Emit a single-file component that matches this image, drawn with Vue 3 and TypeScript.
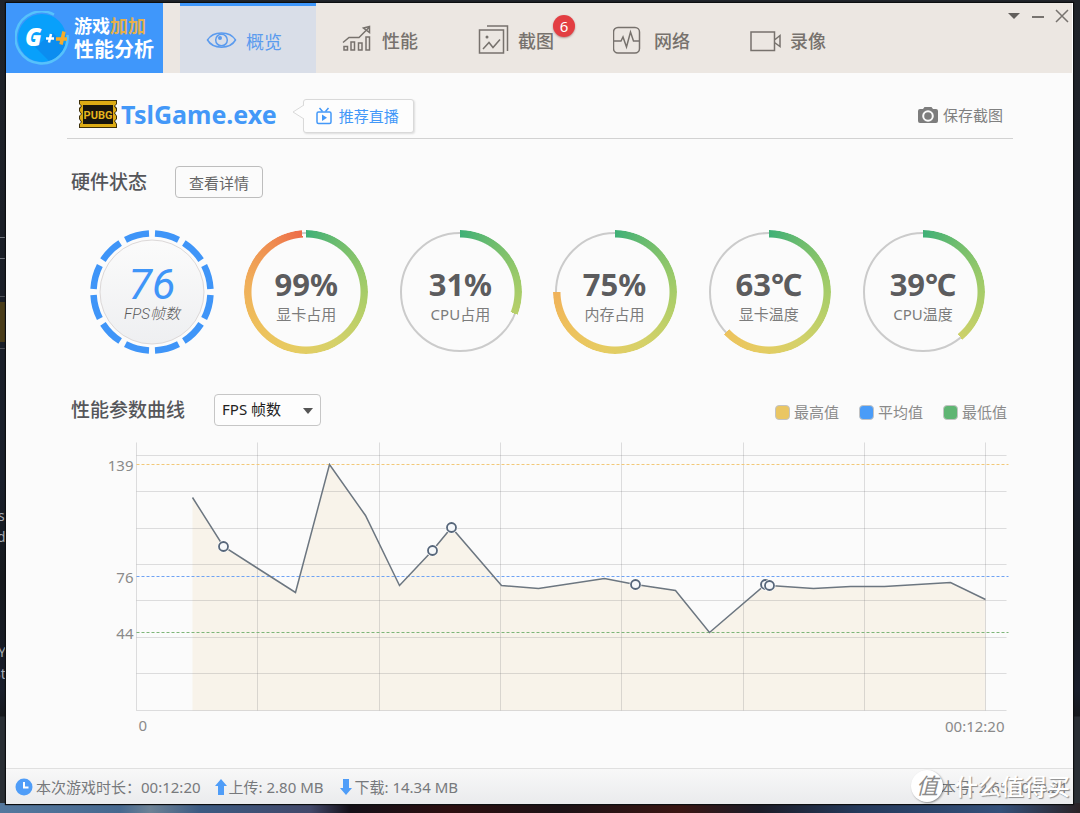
<script setup lang="ts">
import { computed, ref } from 'vue'

interface Tab {
  id: string
  label: string
  badge?: number
}

interface Gauge {
  label: string
  value: string
  percent: number
}

interface Sample {
  x: number
  y: number
  mark?: boolean
}

const tabs: Tab[] = [
  { id: 'overview', label: '概览' },
  { id: 'perf', label: '性能' },
  { id: 'shots', label: '截图', badge: 6 },
  { id: 'network', label: '网络' },
  { id: 'video', label: '录像' },
]
const activeTab = ref('overview')

const gauges: Gauge[] = [
  { label: '显卡占用', value: '99%', percent: 99 },
  { label: 'CPU占用', value: '31%', percent: 31 },
  { label: '内存占用', value: '75%', percent: 75 },
  { label: '显卡温度', value: '63℃', percent: 63 },
  { label: 'CPU温度', value: '39℃', percent: 39 },
]

const metric = ref('fps')

const legend = [
  { label: '最高值', kind: 'max' },
  { label: '平均值', kind: 'avg' },
  { label: '最低值', kind: 'min' },
]

const levels = [
  { value: 139, y: 22, kind: 'max' },
  { value: 76, y: 134, kind: 'avg' },
  { value: 44, y: 190, kind: 'min' },
]

const baseY = 268
const columns = [0, 121, 243, 364, 485, 607, 728, 849]
const rows = [13, 49, 86, 122, 158, 195, 231, 268]

const samples: Sample[] = [
  { x: 56, y: 55 },
  { x: 87, y: 104, mark: true },
  { x: 159, y: 150 },
  { x: 193, y: 22 },
  { x: 229, y: 73 },
  { x: 263, y: 143 },
  { x: 296, y: 108, mark: true },
  { x: 315, y: 85, mark: true },
  { x: 365, y: 143 },
  { x: 402, y: 146 },
  { x: 468, y: 136 },
  { x: 499, y: 142, mark: true },
  { x: 539, y: 148 },
  { x: 573, y: 190 },
  { x: 629, y: 142, mark: true },
  { x: 633, y: 143, mark: true },
  { x: 677, y: 146 },
  { x: 714, y: 144 },
  { x: 748, y: 144 },
  { x: 814, y: 140 },
  { x: 849, y: 157 },
]

const linePoints = computed(() => samples.map((s) => `${s.x},${s.y}`).join(' '))
const areaPoints = computed(
  () => `${samples[0].x},${baseY} ${linePoints.value} ${samples[samples.length - 1].x},${baseY}`,
)
const marks = computed(() => samples.filter((s) => s.mark))
</script>

<template>
  <div class="desktop">
    <div class="behind" aria-hidden="true">
      <span class="scrap s1">s</span>
      <span class="scrap s2">d</span>
      <span class="scrap s3">Y</span>
      <span class="scrap s4">St</span>
    </div>

    <div class="window">
      <header class="header">
        <div class="brand">
          <svg class="brand-mark" viewBox="0 0 54 54" aria-hidden="true">
            <circle cx="27" cy="27" r="24" fill="#08a0fb" />
            <path d="M20 36 L34 50 A24 24 0 0 0 50 34 L38 22 Z" fill="#0b8df0" />
            <path d="M39 3.6 A26 26 0 1 0 52.500 24" fill="none" stroke="#56c2fb" stroke-width="2.500" />
            <text x="10" y="35" class="mark-text">G</text>
            <path d="M36 23 L34 31.500 M31 27.500 H39" stroke="#fff" stroke-width="2.500" />
            <path d="M49 20.500 L46 33.500 M41 28 H52" stroke="#f5ab2c" stroke-width="3.500" />
          </svg>
          <div class="brand-name">
            <span class="brand-top">游戏<em>加加</em></span>
            <span class="brand-bottom">性能分析</span>
          </div>
        </div>

        <nav class="tabs">
          <button
            v-for="tab in tabs"
            :key="tab.id"
            type="button"
            class="tab"
            :class="{ active: tab.id === activeTab }"
            @click="activeTab = tab.id"
          >
            <svg class="tab-icon" viewBox="0 0 32 32" aria-hidden="true">
              <template v-if="tab.id === 'overview'">
                <path d="M2.500 15 C8 5.500 25 5.500 30.500 15 C25 24.500 8 24.500 2.500 15 Z" />
                <circle cx="16.500" cy="15" r="5.800" />
                <circle cx="15" cy="13" r="2" class="solid" />
              </template>
              <template v-else-if="tab.id === 'perf'">
                <path d="M3 22.500 H6.500 V26 H3 Z M10 18 H13.500 V26 H10 Z M17.500 19 H21 V26 H17.500 Z M25 13 H28.500 V26 H25 Z" />
                <path d="M2 18.500 L8 13.500 H18 L28 3.500 M22.500 4 L28.500 2.500 L28.500 8.500 Z" />
              </template>
              <template v-else-if="tab.id === 'shots'">
                <path d="M2.500 6 H26.500 V29 H2.500 Z M10 2 H30.500 V27" />
                <circle cx="10" cy="13" r="1.500" class="solid" />
                <path d="M6 25 L12 18.500 L16 23.500 L23 15.500" />
              </template>
              <template v-else-if="tab.id === 'network'">
                <rect x="0.500" y="3.500" width="26" height="25.500" rx="4.500" />
                <path d="M0.500 17 H8 L10 13 L13.500 23 L17.500 8 L20.500 17 H26.500" />
              </template>
              <template v-else>
                <path d="M2 8 H25.500 V26.500 H2 Z M25.500 16 L31 11.500 V22.500 L25.500 18.500" />
              </template>
            </svg>
            <span>{{ tab.label }}</span>
            <span v-if="tab.badge" class="badge">{{ tab.badge }}</span>
          </button>
        </nav>

        <div class="controls">
          <button type="button" aria-label="菜单">
            <svg viewBox="0 0 14 14"><path d="M1 4 H13 L7 10 Z" fill="#625f5c" /></svg>
          </button>
          <button type="button" aria-label="最小化">
            <svg viewBox="0 0 14 14"><path d="M1 8 H13" stroke="#77736f" stroke-width="2" /></svg>
          </button>
          <button type="button" aria-label="关闭">
            <svg viewBox="0 0 14 14">
              <path d="M1 1 L13 13 M13 1 L1 13" stroke="#77736f" stroke-width="1.500" />
            </svg>
          </button>
        </div>
      </header>

      <main class="main">
        <section class="title-row">
          <svg class="game-icon" viewBox="0 0 38 28" aria-hidden="true">
            <path
              d="M0 0 H38 V4 L36 6 L38 8 V11 L36 13 L38 16 V19 L36 21 L38 24 V28 H0 V24 L2 22 L0 19 V16 L2 14 L0 11 V8 L2 6 L0 4 Z"
              fill="#3d2f08"
            />
            <path
              d="M1 1 H37 V4 L35 6 L37 9 V11 L35 13 L37 16 V19 L35 21 L37 24 V27 H1 V24 L3 22 L1 19 V16 L3 14 L1 11 V9 L3 6 L1 4 Z"
              fill="#dcab14"
            />
            <rect x="4" y="5" width="30" height="19" fill="#17150d" />
            <text x="19" y="19" text-anchor="middle" class="game-text">PUBG</text>
          </svg>
          <h1>TslGame.exe</h1>
          <button type="button" class="bubble">
            <svg class="bubble-tail" viewBox="0 0 12 16" aria-hidden="true">
              <path d="M12 1 L1 8 L12 15" fill="#fdfdfd" stroke="#d9d9d9" />
            </svg>
            <svg class="live-icon" viewBox="0 0 16 18" aria-hidden="true">
              <rect x="1" y="5" width="14" height="11.500" rx="1.500" />
              <path d="M3.500 1 L6.500 4.500 M12.500 1 L9.500 4.500" />
              <path d="M6 7.500 L11 10.800 L6 14 Z" class="play" />
            </svg>
            推荐直播
          </button>
          <button type="button" class="save">
            <svg viewBox="0 0 20 16" aria-hidden="true">
              <path
                d="M2 2 H5 L6.500 0 H13.500 L15 2 H18 Q20 2 20 4 V14 Q20 16 18 16 H2 Q0 16 0 14 V4 Q0 2 2 2 Z"
                fill="#7d7d7d"
              />
              <circle cx="10" cy="9" r="4.800" fill="#7d7d7d" stroke="#fbfbfb" stroke-width="2" />
            </svg>
            保存截图
          </button>
        </section>

        <section class="section-head">
          <h2>硬件状态</h2>
          <button type="button" class="detail">查看详情</button>
        </section>

        <section class="gauges">
          <div class="gauge fps">
            <svg class="fps-ring" viewBox="0 0 124 124" aria-hidden="true">
              <defs>
                <linearGradient id="dial" x1="0" y1="0" x2="0" y2="1">
                  <stop offset="0" stop-color="#fbfbfb" />
                  <stop offset="1" stop-color="#eeeff1" />
                </linearGradient>
              </defs>
              <circle
                cx="62" cy="62" r="58.500" fill="none" stroke="#3f95f8" stroke-width="6.500"
                pathLength="360" stroke-dasharray="24 6" stroke-dashoffset="-3"
              />
              <circle cx="62" cy="62" r="52" fill="url(#dial)" stroke="#dcd8d8" />
            </svg>
            <span class="fps-value">76</span>
            <span class="fps-label">FPS帧数</span>
          </div>
          <div
            v-for="g in gauges"
            :key="g.label"
            class="gauge"
            :style="{ '--end': `${g.percent * 3.6}deg` }"
          >
            <span class="track"></span>
            <span class="arc"></span>
            <strong>{{ g.value }}</strong>
            <span class="gauge-label">{{ g.label }}</span>
          </div>
        </section>

        <section class="section-head curve-head">
          <h2><label for="metric">性能参数曲线</label></h2>
          <div class="select-wrap">
            <select id="metric" v-model="metric">
              <option value="fps">FPS 帧数</option>
            </select>
            <svg viewBox="0 0 10 6" aria-hidden="true"><path d="M0 0 H10 L5 6 Z" fill="#555" /></svg>
          </div>
          <ul class="legend">
            <li v-for="item in legend" :key="item.kind">
              <i class="swatch" :class="item.kind"></i>{{ item.label }}
            </li>
          </ul>
        </section>

        <svg class="chart" viewBox="0 0 946 306" role="img" aria-label="FPS 帧数">
          <g transform="translate(69.500 8.500)">
            <polygon :points="areaPoints" class="area" />
            <g class="grid">
              <line v-for="x in columns" :key="`c${x}`" :x1="x" :x2="x" y1="0" :y2="baseY" />
              <line v-for="y in rows" :key="`r${y}`" x1="0" x2="870" :y1="y" :y2="y" />
            </g>
            <g v-for="level in levels" :key="level.kind">
              <line x1="0" x2="872" :y1="level.y" :y2="level.y" class="level" :class="`level-${level.kind}`" />
              <text x="-3" :y="level.y + 6" text-anchor="end">{{ level.value }}</text>
            </g>
            <polyline :points="linePoints" class="curve" />
            <g v-for="m in marks" :key="m.x">
              <circle :cx="m.x" :cy="m.y" r="6" class="halo" />
              <circle :cx="m.x" :cy="m.y" r="4.500" class="mark" />
            </g>
            <text x="2" y="288">0</text>
            <text x="868" y="289" text-anchor="end">00:12:20</text>
          </g>
        </svg>
      </main>

      <footer class="footer">
        <svg class="clock" viewBox="0 0 18 18" aria-hidden="true">
          <circle cx="9" cy="9" r="8.500" fill="#4f9df8" />
          <path d="M9 4 V9.500 H13.500" fill="none" stroke="#fff" stroke-width="2" />
        </svg>
        <span class="stat duration">本次游戏时长：<span>00:12:20</span></span>
        <svg class="arrow" viewBox="0 0 12 16" aria-hidden="true">
          <path d="M6 0 L12 7 H9 V16 H3 V7 H0 Z" fill="#4f9df8" />
        </svg>
        <span class="stat upload">上传: 2.80 MB</span>
        <svg class="arrow" viewBox="0 0 12 16" aria-hidden="true">
          <path d="M6 16 L12 9 H9 V0 H3 V9 H0 Z" fill="#4f9df8" />
        </svg>
        <span class="stat">下载: 14.34 MB</span>
        <span class="version">版本号: 2.65.1020.21</span>
        <div class="watermark">
          <span class="seal">值</span>
          <span class="seal-text">什么值得买</span>
        </div>
      </footer>
    </div>
  </div>
</template>

<style>
body {
  margin: 0;
  background: #1d2228;
}
</style>

<style scoped>
* {
  box-sizing: border-box;
}

.desktop {
  position: relative;
  display: flex;
  min-height: 100vh;
  padding: 3px 7px 9px 6px;
  overflow: hidden;
  font-family: "Noto Sans", "Noto Sans CJK SC", sans-serif;
  font-size: 15px;
  color: #7a7a7a;
  background:
    linear-gradient(90deg, #54789e 0, #46688f 120px, #6d8296 150px, #3b5a82 200px, #42486a 310px, #141018 350px, #2c0f10 450px, #1c1216 560px, #3a1613 680px, #1b1c28 760px, #253a5c 860px, #34507a 1000px, #2a2226 1080px) bottom / 100% 10px no-repeat,
    linear-gradient(180deg, #20242a 0, #1b1f27 220px, #191f2b 480px, #16191d 580px, #191e2b 690px, #16191d 716px, #292e34 717px);
}

button {
  padding: 0;
  border: 0;
  background: none;
  font: inherit;
  color: inherit;
  cursor: pointer;
}

h1,
h2 {
  margin: 0;
}

.behind {
  position: absolute;
  top: 0;
  bottom: 0;
  left: 0;
  width: 6px;
  overflow: hidden;
  background:
    linear-gradient(#70747c, #70747c) 0 237px / 6px 1px no-repeat,
    linear-gradient(#70747c, #70747c) 0 258px / 6px 1px no-repeat,
    linear-gradient(#4f5157, #4f5157) 0 296px / 6px 1px no-repeat,
    linear-gradient(#4a3d1a, #4a3d1a) 0 302px / 6px 40px no-repeat,
    linear-gradient(#4f5157, #4f5157) 0 348px / 6px 1px no-repeat;
}

.scrap {
  position: absolute;
  left: -2px;
  font-size: 14px;
  line-height: 20px;
  color: #a9adb3;
}

.s1 {
  top: 506px;
}

.s2 {
  top: 527px;
  left: -3px;
}

.s3 {
  top: 642px;
}

.s4 {
  top: 664px;
  left: -7px;
}

.window {
  position: relative;
  display: flex;
  flex: 1;
  flex-direction: column;
  min-width: 0;
  background: #fbfbfb;
  box-shadow: 0 0 1px 1px #0c0e10;
}

.header {
  display: flex;
  height: 70px;
  border-right: 1px solid #fff;
  background: #ece7e2;
}

.brand {
  display: flex;
  width: 157px;
  padding-left: 9px;
  align-items: center;
  gap: 5px;
  background: #3f97fb;
  color: #fff;
}

.brand-mark {
  width: 54px;
  height: 54px;
  flex: none;
}

.mark-text {
  font: italic 900 24px "Open Sans", sans-serif;
  fill: #fff;
}

.brand-name {
  display: flex;
  flex-direction: column;
  font-weight: 700;
  white-space: nowrap;
}

.brand-top {
  font-size: 18px;
  line-height: 24px;
}

.brand-top em {
  font-style: normal;
  color: #e6b04c;
}

.brand-bottom {
  font-size: 20px;
  line-height: 24px;
}

.tabs {
  display: flex;
  margin-left: 17px;
}

.tab {
  position: relative;
  display: flex;
  width: 136px;
  padding: 4px 0 0 25px;
  align-items: center;
  gap: 9px;
  font-size: 18px;
  font-weight: 500;
  color: #77726d;
}

.tab.active {
  padding-top: 2px;
  border-top: 3px solid #3f97fb;
  background: #d9dee8;
  color: #5b9bee;
  font-weight: 400;
}

.tab-icon {
  width: 32px;
  height: 32px;
  fill: none;
  stroke: currentColor;
  stroke-width: 1.5;
}

.tab-icon .solid {
  fill: currentColor;
  stroke: none;
}

.badge {
  position: absolute;
  top: 12px;
  left: 101px;
  width: 22px;
  height: 22px;
  border-radius: 50%;
  background: #e33e42;
  box-shadow: 0 1px 2px rgba(120, 60, 60, 0.5);
  color: #fff;
  font-size: 15px;
  font-weight: 400;
  line-height: 22px;
  text-align: center;
}

.controls {
  display: flex;
  margin: 6px 3px 0 auto;
  align-items: flex-start;
  gap: 10px;
}

.controls svg {
  display: block;
  width: 14px;
  height: 14px;
}

.main {
  flex: 1;
  padding: 0 60px 0 61px;
}

.title-row {
  display: flex;
  height: 66px;
  padding: 18px 10px 0 12px;
  align-items: center;
  border-bottom: 1px solid #d2d2d2;
}

.game-icon {
  width: 38px;
  height: 28px;
  margin: 0 4px 2px 0;
}

.game-text {
  font: 700 11px Roboto, sans-serif;
  fill: #e5b41c;
}

h1 {
  margin-bottom: 2px;
  font-size: 25px;
  line-height: 32px;
  color: #4398f8;
}

.bubble {
  position: relative;
  display: flex;
  height: 34px;
  margin: 2px 0 0 26px;
  padding: 0 14px 0 12px;
  align-items: center;
  gap: 7px;
  border: 1px solid #d9d9d9;
  border-radius: 3px;
  background: #fdfdfd;
  box-shadow: 1px 1px 2px rgba(0, 0, 0, 0.12);
  color: #4398f8;
  white-space: nowrap;
}

.bubble-tail {
  position: absolute;
  top: 4px;
  left: -12px;
  width: 12px;
  height: 16px;
}

.live-icon {
  width: 16px;
  height: 18px;
  fill: none;
  stroke: currentColor;
  stroke-width: 1.5;
}

.live-icon .play {
  fill: currentColor;
  stroke: none;
}

.save {
  display: flex;
  margin-left: auto;
  align-items: center;
  gap: 5px;
  color: #808080;
}

.save svg {
  width: 20px;
  height: 16px;
}

.section-head {
  display: flex;
  margin-top: 27px;
  padding: 0 6px 0 4px;
  align-items: center;
}

h2 {
  font-size: 19px;
  font-weight: 500;
  line-height: 28px;
  color: #55565a;
}

.detail {
  width: 88px;
  height: 32px;
  margin-left: 28px;
  border: 1px solid #bdbdbd;
  border-radius: 4px;
  color: #666;
}

.gauges {
  display: flex;
  margin-top: 32px;
  padding: 0 28px 0 23px;
  justify-content: space-between;
}

.gauge {
  position: relative;
  display: flex;
  width: 124px;
  height: 124px;
  padding-top: 34px;
  flex-direction: column;
  align-items: center;
}

.track,
.arc {
  position: absolute;
  border-radius: 50%;
}

.track {
  inset: 2px;
  border: 2px solid #cbcbcb;
}

.arc {
  inset: 0;
  background: conic-gradient(#3fb077 0deg, #6fbd6e 35deg, #9bca69 75deg, #b6cf69 110deg, #d5d169 150deg, #e6cc62 190deg, #eec05c 235deg, #f0ae5a 280deg, #ef8c50 325deg, #ec6748 360deg);
  mask:
    radial-gradient(closest-side, transparent 54px, #000 55px),
    conic-gradient(#000 var(--end), transparent var(--end));
  mask-composite: intersect;
}

.gauge strong {
  font-size: 31px;
  line-height: 40px;
  color: #5c5c5e;
}

.gauge-label {
  line-height: 20px;
  color: #7c7c7c;
}

.fps-ring {
  position: absolute;
  inset: 0;
  width: 124px;
  height: 124px;
}

.fps-value,
.fps-label {
  position: relative;
}

.fps-value {
  font-family: Roboto, sans-serif;
  font-size: 43px;
  font-style: italic;
  font-weight: 400;
  line-height: 40px;
  color: #3f95f8;
}

.fps-label {
  font-family: Roboto, "Noto Sans CJK SC", sans-serif;
  font-size: 15px;
  font-style: italic;
  font-weight: 300;
  line-height: 20px;
  color: #5a5a5a;
}

.curve-head {
  margin-top: 40px;
}

.select-wrap {
  position: relative;
  margin-left: 29px;
}

.select-wrap select {
  display: block;
  width: 107px;
  height: 32px;
  padding: 0 22px 2px 7px;
  appearance: none;
  border: 1px solid #c6c6c6;
  border-radius: 4px;
  background: #fdfdfd;
  font: inherit;
  color: #222;
}

.select-wrap svg {
  position: absolute;
  top: 14px;
  right: 8px;
  width: 10px;
  height: 6px;
  pointer-events: none;
}

.legend {
  display: flex;
  margin: 4px 0 0 auto;
  padding: 0;
  gap: 20px;
  list-style: none;
  color: #8a8a8a;
}

.legend li {
  display: flex;
  align-items: center;
  gap: 4px;
  line-height: 20px;
}

.swatch {
  width: 15px;
  height: 15px;
  border: 1px solid #c3c3c3;
  border-radius: 4px;
}

.swatch.max {
  background: #eac663;
}

.swatch.avg {
  background: #4a9cf8;
}

.swatch.min {
  background: #5fb573;
}

.chart {
  display: block;
  width: 100%;
  margin-top: 8px;
}

.chart text {
  font-size: 15px;
  fill: #8a8a8a;
}

.area {
  fill: #f8f3ea;
}

.grid line {
  stroke: rgba(110, 110, 115, 0.22);
}

.level {
  stroke-width: 1;
  stroke-dasharray: 3 2;
}

.level-max {
  stroke: #f2c878;
}

.level-avg {
  stroke: #6ea2f4;
}

.level-min {
  stroke: #7db578;
}

.curve {
  fill: none;
  stroke: #6c7680;
  stroke-width: 1.5;
}

.halo {
  fill: #fbfbfb;
}

.mark {
  fill: #f6f8fa;
  stroke: #56667a;
  stroke-width: 1.8;
}

.footer {
  position: relative;
  display: flex;
  height: 36px;
  padding: 0 5px 0 9px;
  align-items: center;
  border-top: 1px solid #e0e0e0;
  background: linear-gradient(#f8f8f8, #eaebed);
  color: #77797c;
  white-space: nowrap;
}

.clock {
  width: 18px;
  height: 18px;
  margin-right: 3px;
}

.arrow {
  width: 12px;
  height: 16px;
  margin-right: 2px;
}

.duration {
  margin-right: 14px;
}

.upload {
  margin-right: 17px;
}

.version {
  margin-left: auto;
}

.watermark {
  position: absolute;
  top: 1px;
  right: 3px;
  display: flex;
  align-items: center;
  gap: 12px;
}

.seal {
  width: 32px;
  height: 32px;
  border-radius: 50%;
  background: #fff;
  box-shadow: 1px 1px 2px rgba(0, 0, 0, 0.4);
  font-size: 22px;
  font-style: italic;
  line-height: 31px;
  text-align: center;
  color: #8b8b8b;
}

.seal-text {
  font-size: 23px;
  line-height: 32px;
  font-weight: 500;
  color: #fff;
  text-shadow: 1px 1px 1px #8a8a8a;
}
</style>
